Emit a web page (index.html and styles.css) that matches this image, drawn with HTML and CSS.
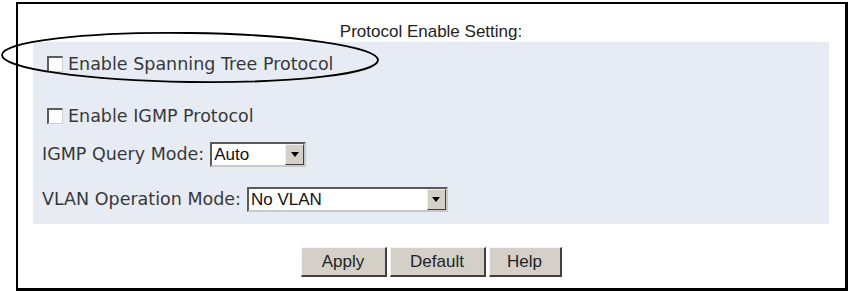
FILE: index.html
```html
<!DOCTYPE html>
<html>
<head>
<meta charset="utf-8">
<link rel="stylesheet" href="styles.css">
</head>
<body>
<div class="page">
  <div class="frame">
    <div class="title">Protocol Enable Setting:</div>
    <div class="panel">
      <label class="row row-stp"><span class="box"></span>Enable Spanning Tree Protocol</label>
      <label class="row row-igmp"><span class="box"></span>Enable IGMP Protocol</label>
      <div class="row row-query">
        <span class="label">IGMP Query Mode:</span>
        <div class="select select-short"><span class="value">Auto</span><span class="arrow"></span></div>
      </div>
      <div class="row row-vlan">
        <span class="label">VLAN Operation Mode:</span>
        <div class="select select-long"><span class="value">No VLAN</span><span class="arrow"></span></div>
      </div>
    </div>
    <div class="buttons">
      <button class="btn btn-apply">Apply</button>
      <button class="btn btn-default">Default</button>
      <button class="btn btn-help">Help</button>
    </div>
  </div>
  <svg class="mark" width="400" height="100" viewBox="0 0 400 100">
    <ellipse cx="190" cy="57.5" rx="188" ry="24.5" transform="rotate(0.8 190 57.5)" fill="none" stroke="#000" stroke-width="1.8"/>
  </svg>
</div>
</body>
</html>
```

FILE: styles.css
```css
html, body {
  margin: 0;
  padding: 0;
  background: #fff;
}

.page {
  position: relative;
  width: 851px;
  height: 292px;
  padding-top: 2px;
  box-sizing: border-box;
}

.frame {
  margin-left: 16px;
  width: 832px;
  height: 289px;
  box-sizing: border-box;
  border: 2px solid #000;
  border-width: 2px 3px 3px 2px;
  padding: 0 16px 0 15px;
}

.title {
  font-family: "Liberation Sans", Arial, sans-serif;
  font-size: 17px;
  line-height: 20px;
  color: #222;
  text-align: center;
  padding-top: 18px;
}

.panel {
  background: #e7ecf4;
  padding: 8px 0 11px 9px;
  display: flex;
  flex-direction: column;
  font-family: "DejaVu Sans", Verdana, sans-serif;
  font-size: 17.5px;
  color: #383838;
}

.row {
  height: 28px;
  display: flex;
  align-items: center;
  white-space: nowrap;
}

.row-igmp { margin-top: 24px; }
.row-query { margin-top: 10px; }
.row-vlan { margin-top: 17px; }

.box {
  flex: 0 0 auto;
  display: block;
  width: 16px;
  height: 16px;
  box-sizing: border-box;
  margin-left: 5px;
  margin-right: 5px;
  background: #fff;
  border-top: 2px solid #5c5c5c;
  border-left: 2px solid #5c5c5c;
  border-right: 1px solid #d0d0d0;
  border-bottom: 1px solid #d0d0d0;
  margin-top: -1px;
}

.label {
  margin-right: 6px;
}

.select {
  flex: 0 0 auto;
  height: 25px;
  box-sizing: border-box;
  background: #fff;
  border-top: 2px solid #5a5a5a;
  border-left: 2px solid #5a5a5a;
  border-right: 2px solid #c8c8c8;
  border-bottom: 2px solid #c8c8c8;
  display: flex;
  align-items: stretch;
  font-family: "Liberation Sans", Arial, sans-serif;
  font-size: 17px;
  color: #111;
}

.select-short { width: 96px; }
.select-long { width: 201px; }

.value {
  flex: 1;
  padding-left: 2px;
  line-height: 21px;
}

.arrow {
  width: 19px;
  box-sizing: border-box;
  background: #d4d0c8;
  border-top: 1px solid #f0f0f0;
  border-left: 1px solid #f0f0f0;
  border-right: 1px solid #404040;
  border-bottom: 1px solid #404040;
  display: flex;
  align-items: center;
  justify-content: center;
}

.arrow::after {
  content: "";
  width: 0;
  height: 0;
  border-left: 4px solid transparent;
  border-right: 4px solid transparent;
  border-top: 5px solid #000;
}

.buttons {
  display: flex;
  justify-content: center;
  gap: 3px;
  margin-top: 23px;
}

.btn {
  height: 30px;
  box-sizing: border-box;
  background: #d4d0c8;
  font-family: "Liberation Sans", Arial, sans-serif;
  font-size: 17px;
  color: #222;
  padding: 0;
  border-top: 1px solid #f4f4f4;
  border-left: 1px solid #f4f4f4;
  border-right: 2px solid #404040;
  border-bottom: 2px solid #404040;
}

.btn-apply { width: 86px; }
.btn-default { width: 96px; }
.btn-help { width: 73px; }

.mark {
  position: absolute;
  left: 0;
  top: 0;
  pointer-events: none;
}
```
